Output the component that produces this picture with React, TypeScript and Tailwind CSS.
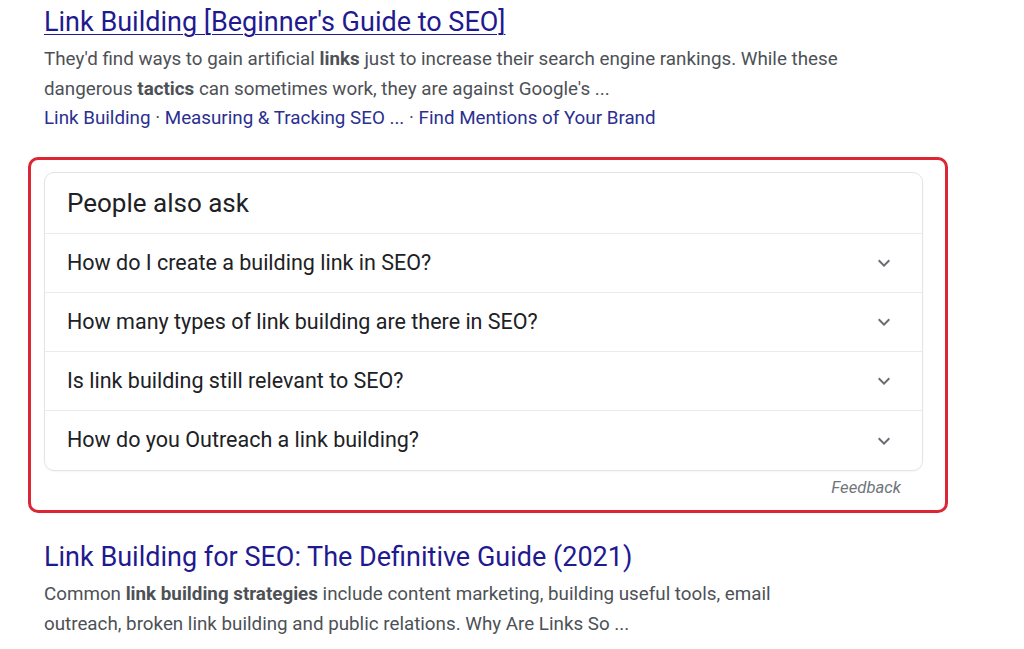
const questions = [
    'How do I create a building link in SEO?',
    'How many types of link building are there in SEO?',
    'Is link building still relevant to SEO?',
    'How do you Outreach a link building?',
];

function ExpandMore() {
    return (
        <svg width="24" height="24" viewBox="0 0 24 24" className="fill-[#6a6e73]">
            <path d="M16.59 8.59 12 13.17 7.41 8.59 6 10l6 6 6-6z" />
        </svg>
    );
}

export default function App() {
    return (
        <div className="min-h-screen bg-white font-['Roboto',sans-serif]">
            <div className="pl-[44px] pt-[4px]">
                <a href="#" className="block text-[27px] leading-[36px] text-[#1f1a8f] underline decoration-1 underline-offset-[3px]">
                    Link Building [Beginner's Guide to SEO]
                </a>
                <p className="mt-[4px] w-[845px] text-[18.8px] leading-[30px] text-[#4d5156]">
                    They'd find ways to gain artificial <b>links</b> just to increase their search engine rankings. While these dangerous <b>tactics</b> can sometimes work, they are against Google's ...
                </p>
                <div className="text-[18.8px] leading-[29px] text-[#2b2f8f]">
                    <a href="#">Link Building</a>
                    <span className="text-[#4d5156]"> · </span>
                    <a href="#">Measuring &amp; Tracking SEO ...</a>
                    <span className="text-[#4d5156]"> · </span>
                    <a href="#">Find Mentions of Your Brand</a>
                </div>
            </div>

            <div className="ml-[28px] mt-[24px] w-[920px] rounded-[10px] border-[3px] border-[#dc2633] pl-[13px] pr-[22px] pt-[12px] pb-[10px]">
                <div className="rounded-[10px] border border-[#e4e4e4] shadow-[0_1px_2px_rgba(0,0,0,0.04)]">
                    <div className="flex h-[61px] items-center border-b border-[#ebebeb] pl-[22px] text-[26px] text-[#202124]">
                        People also ask
                    </div>
                    {questions.map((q, i) => (
                        <div
                            key={q}
                            className={`flex h-[59px] items-center justify-between pl-[22px] pr-[26px] text-[21.5px] text-[#202124] ${i < questions.length - 1 ? 'border-b border-[#ebebeb]' : ''}`}
                        >
                            <span>{q}</span>
                            <ExpandMore />
                        </div>
                    ))}
                </div>
                <div className="mt-[5px] pr-[22px] text-right text-[16.7px] italic leading-[24px] text-[#70757a]">
                    Feedback
                </div>
            </div>

            <div className="pl-[44px] pt-[26px]">
                <a href="#" className="block text-[27px] leading-[36px] text-[#1f1a8f]">
                    Link Building for SEO: The Definitive Guide (2021)
                </a>
                <p className="mt-[4px] w-[790px] text-[18.8px] leading-[30px] text-[#4d5156]">
                    Common <b>link building strategies</b> include content marketing, building useful tools, email outreach, broken link building and public relations. Why Are Links So ...
                </p>
            </div>
        </div>
    );
}
